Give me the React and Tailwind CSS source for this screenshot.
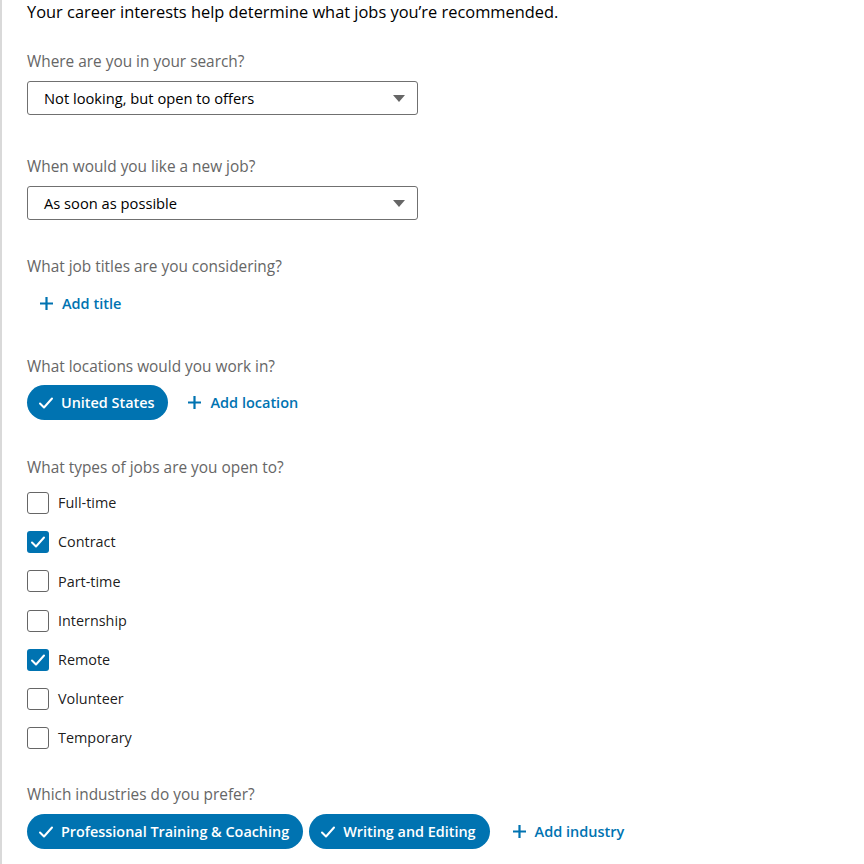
import { useState } from "react";

const BLUE = "#0073b1";

function Caret() {
  return (
    <svg width="12" height="7" viewBox="0 0 12 7" className="shrink-0">
      <path d="M0 0 H12 L6 7 Z" fill="#666666" />
    </svg>
  );
}

function Check({ size = 16, stroke = 2 }) {
  return (
    <svg width={size} height={size} viewBox="0 0 16 16" fill="none">
      <path d="M2 8.5 L6 12.5 L14 3.5" stroke="white" strokeWidth={stroke} strokeLinecap="round" strokeLinejoin="round" />
    </svg>
  );
}

function Plus() {
  return (
    <svg width="15" height="15" viewBox="0 0 15 15" fill="none">
      <path d="M7.5 1 V14 M1 7.5 H14" stroke={BLUE} strokeWidth="2.2" />
    </svg>
  );
}

function Label({ children }) {
  return <div className="pt-px text-[15.4px] leading-6 text-[#666666]">{children}</div>;
}

function Select({ value }) {
  return (
    <div className="mt-[7px] flex h-[34px] w-[391px] items-center justify-between rounded-[3px] border border-[#707070] pl-4 pr-3">
      <span className="text-[14.7px] text-black">{value}</span>
      <Caret />
    </div>
  );
}

function AddButton({ children }) {
  return (
    <button className="flex h-[35px] items-center gap-2 px-3 text-[14.5px] font-semibold text-[#0073b1]">
      <Plus />
      {children}
    </button>
  );
}

function Pill({ children }) {
  return (
    <div className="flex h-[35px] items-center gap-[7px] rounded-full bg-[#0073b1] pl-[11px] pr-[14px] text-[14.4px] font-semibold text-white">
      <Check />
      {children}
    </div>
  );
}

export default function App() {
  const [jobTypes, setJobTypes] = useState({
    "Full-time": false,
    Contract: true,
    "Part-time": false,
    Internship: false,
    Remote: true,
    Volunteer: false,
    Temporary: false,
  });

  return (
    <div
      className="min-h-screen border-l-2 border-[#d9d9d9] bg-white pl-[25px] text-black"
      style={{ fontFamily: '"Open Sans", "Noto Sans", sans-serif' }}
    >
      <p className="text-[16.4px] leading-6">
        Your career interests help determine what jobs you’re recommended.
      </p>

      <div className="mt-[25px]">
        <Label>Where are you in your search?</Label>
        <Select value="Not looking, but open to offers" />
      </div>

      <div className="mt-[39px]">
        <Label>When would you like a new job?</Label>
        <Select value="As soon as possible" />
      </div>

      <div className="mt-[34px]">
        <Label>What job titles are you considering?</Label>
        <div className="mt-[7px]">
          <AddButton>Add title</AddButton>
        </div>
      </div>

      <div className="mt-[33px]">
        <Label>What locations would you work in?</Label>
        <div className="mt-[6px] flex items-center gap-[7px]">
          <Pill>United States</Pill>
          <AddButton>Add location</AddButton>
        </div>
      </div>

      <div className="mt-[35px]">
        <Label>What types of jobs are you open to?</Label>
        <div className="mt-3 flex flex-col gap-[17.2px]">
          {Object.keys(jobTypes).map((name) => (
            <label key={name} className="flex h-[22px] cursor-pointer items-center gap-[9px]">
              <input
                type="checkbox"
                className="hidden"
                checked={jobTypes[name]}
                onChange={() => setJobTypes({ ...jobTypes, [name]: !jobTypes[name] })}
              />
              {jobTypes[name] ? (
                <span className="flex h-[22px] w-[22px] items-center justify-center rounded-[3px] bg-[#0073b1]">
                  <Check size={16} stroke={2} />
                </span>
              ) : (
                <span className="h-[22px] w-[22px] rounded-[3px] border border-[#666666]" />
              )}
              <span className="text-[14.4px] text-black/90">{name}</span>
            </label>
          ))}
        </div>
      </div>

      <div className="mt-[33px]">
        <Label>Which industries do you prefer?</Label>
        <div className="mt-[7px] flex items-center gap-[6px]">
          <Pill>Professional Training &amp; Coaching</Pill>
          <Pill>Writing and Editing</Pill>
          <div className="ml-1">
            <AddButton>Add industry</AddButton>
          </div>
        </div>
      </div>
    </div>
  );
}
